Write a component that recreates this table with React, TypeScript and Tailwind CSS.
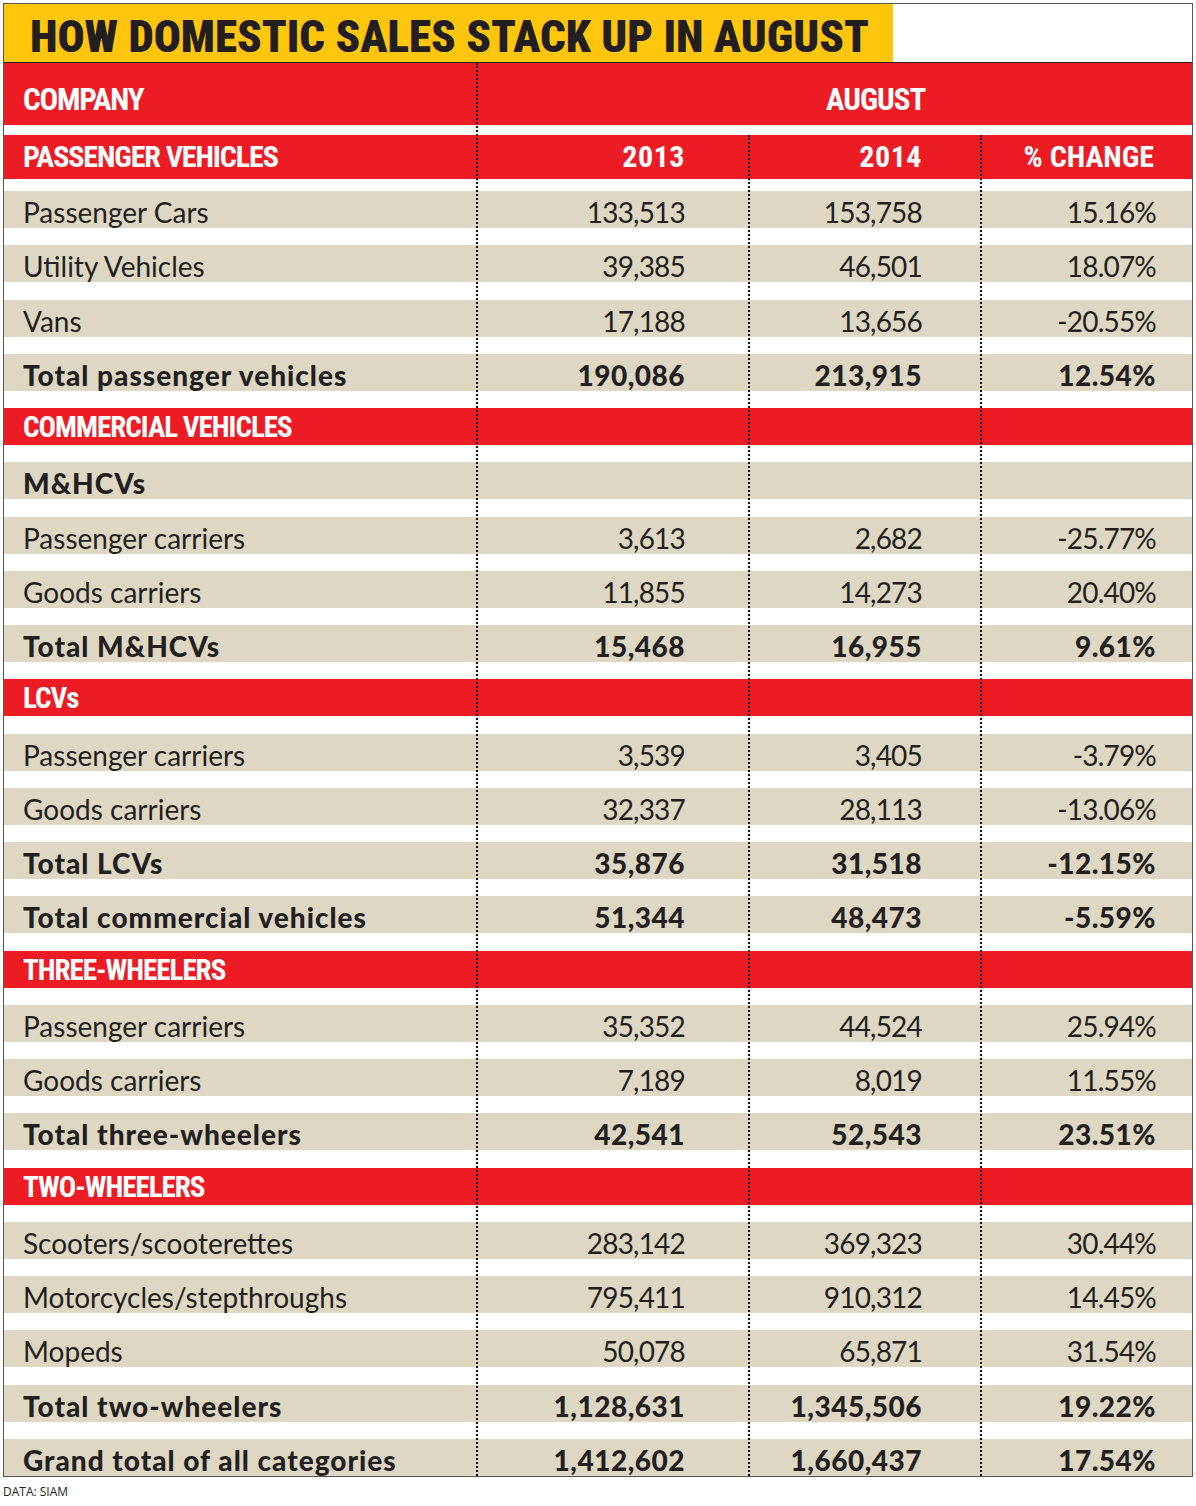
import React from "react";

type Row = {
  kind: "data" | "total" | "section" | "sub";
  label: string;
  y13?: string;
  y14?: string;
  change?: string;
};

const rows: Row[] = [
  { kind: "data", label: "Passenger Cars", y13: "133,513", y14: "153,758", change: "15.16%" },
  { kind: "data", label: "Utility Vehicles", y13: "39,385", y14: "46,501", change: "18.07%" },
  { kind: "data", label: "Vans", y13: "17,188", y14: "13,656", change: "-20.55%" },
  { kind: "total", label: "Total passenger vehicles", y13: "190,086", y14: "213,915", change: "12.54%" },
  { kind: "section", label: "COMMERCIAL VEHICLES" },
  { kind: "sub", label: "M&HCVs" },
  { kind: "data", label: "Passenger carriers", y13: "3,613", y14: "2,682", change: "-25.77%" },
  { kind: "data", label: "Goods carriers", y13: "11,855", y14: "14,273", change: "20.40%" },
  { kind: "total", label: "Total M&HCVs", y13: "15,468", y14: "16,955", change: "9.61%" },
  { kind: "section", label: "LCVs" },
  { kind: "data", label: "Passenger carriers", y13: "3,539", y14: "3,405", change: "-3.79%" },
  { kind: "data", label: "Goods carriers", y13: "32,337", y14: "28,113", change: "-13.06%" },
  { kind: "total", label: "Total LCVs", y13: "35,876", y14: "31,518", change: "-12.15%" },
  { kind: "total", label: "Total commercial vehicles", y13: "51,344", y14: "48,473", change: "-5.59%" },
  { kind: "section", label: "THREE-WHEELERS" },
  { kind: "data", label: "Passenger carriers", y13: "35,352", y14: "44,524", change: "25.94%" },
  { kind: "data", label: "Goods carriers", y13: "7,189", y14: "8,019", change: "11.55%" },
  { kind: "total", label: "Total three-wheelers", y13: "42,541", y14: "52,543", change: "23.51%" },
  { kind: "section", label: "TWO-WHEELERS" },
  { kind: "data", label: "Scooters/scooterettes", y13: "283,142", y14: "369,323", change: "30.44%" },
  { kind: "data", label: "Motorcycles/stepthroughs", y13: "795,411", y14: "910,312", change: "14.45%" },
  { kind: "data", label: "Mopeds", y13: "50,078", y14: "65,871", change: "31.54%" },
  { kind: "total", label: "Total two-wheelers", y13: "1,128,631", y14: "1,345,506", change: "19.22%" },
  { kind: "total", label: "Grand total of all categories", y13: "1,412,602", y14: "1,660,437", change: "17.54%" },
];

const cols = "grid grid-cols-[472px_272px_233px_211px]";
const narrow = "font-['Roboto',sans-serif] font-bold font-stretch-condensed";
const body = "font-['Lato','Liberation_Sans',sans-serif]";

function TableRow({ row, last }: { row: Row; last: boolean }) {
  if (row.kind === "section") {
    return (
      <div className={`${cols} h-[37px] items-center bg-[#ed1c24] text-white ${last ? "" : "mb-[17.26px]"}`}>
        <div className={`${narrow} pl-[19px] pt-[2px] text-[29px] tracking-[-1px] leading-none`}>{row.label}</div>
      </div>
    );
  }
  const bold = row.kind !== "data";
  const num = bold ? "tracking-[0.5px]" : "tracking-[-0.8px]";
  return (
    <div
      className={`${cols} h-[37px] items-center bg-[#ddd7c4] text-[#231f20] ${body} text-[28px] ${
        bold ? "font-black" : ""
      } ${last ? "" : "mb-[17.26px]"}`}
    >
      <div className={`pl-[19px] whitespace-nowrap ${bold ? "tracking-[1px]" : ""}`}>{row.label}</div>
      <div className={`pr-[63px] text-right ${num}`}>{row.y13}</div>
      <div className={`pr-[59px] text-right ${num}`}>{row.y14}</div>
      <div className={`pr-[36px] text-right ${num}`}>{row.change}</div>
    </div>
  );
}

export default function App() {
  return (
    <div className="w-[1196px] h-[1506px] bg-white pl-[3px] pt-[3px]">
      <div className="w-[1190px] border border-[#555]">
        {/* title */}
        <div className="flex border-b border-[#222]">
          <div className="w-[889px] h-[58px] bg-[#ffc60b] flex items-center pl-[26px] pt-[7px]">
            <h1 className="font-['Roboto',sans-serif] font-black font-stretch-condensed text-[45px] text-[#231f20] leading-none whitespace-nowrap">
              HOW DOMESTIC SALES STACK UP IN AUGUST
            </h1>
          </div>
        </div>

        <div className="relative">
          {/* header rows */}
          <div className={`${cols} h-[62px] items-center pt-[10px] bg-[#ed1c24] text-white ${narrow} text-[31px] leading-none`}>
            <div className="pl-[19px] tracking-[-1.2px]">COMPANY</div>
            <div className="col-span-3 pl-[350px] tracking-[-1px]">AUGUST</div>
          </div>
          <div className={`${cols} h-[44px] mt-[10px] items-center bg-[#ed1c24] text-white ${narrow} text-[30px] leading-none`}>
            <div className="pl-[19px] tracking-[-1.1px]">PASSENGER VEHICLES</div>
            <div className="pr-[63px] text-right tracking-[0.5px]">2013</div>
            <div className="pr-[59px] text-right tracking-[0.5px]">2014</div>
            <div className="pr-[38px] text-right">% CHANGE</div>
          </div>
          <div className="mt-[12px]">
            {rows.map((r, i) => (
              <TableRow key={i} row={r} last={i === rows.length - 1} />
            ))}
          </div>

          {/* dotted column rules */}
          <div className="absolute left-[472px] top-0 bottom-0 border-l-2 border-dotted border-[#111]" />
          <div className="absolute left-[744px] top-[72px] bottom-0 border-l-2 border-dotted border-[#111]" />
          <div className="absolute left-[976px] top-[72px] bottom-0 border-l-2 border-dotted border-[#111]" />
        </div>
      </div>
      <p className="mt-[9px] font-['Open_Sans',sans-serif] text-[12px] text-[#231f20] leading-none">DATA: SIAM</p>
    </div>
  );
}
